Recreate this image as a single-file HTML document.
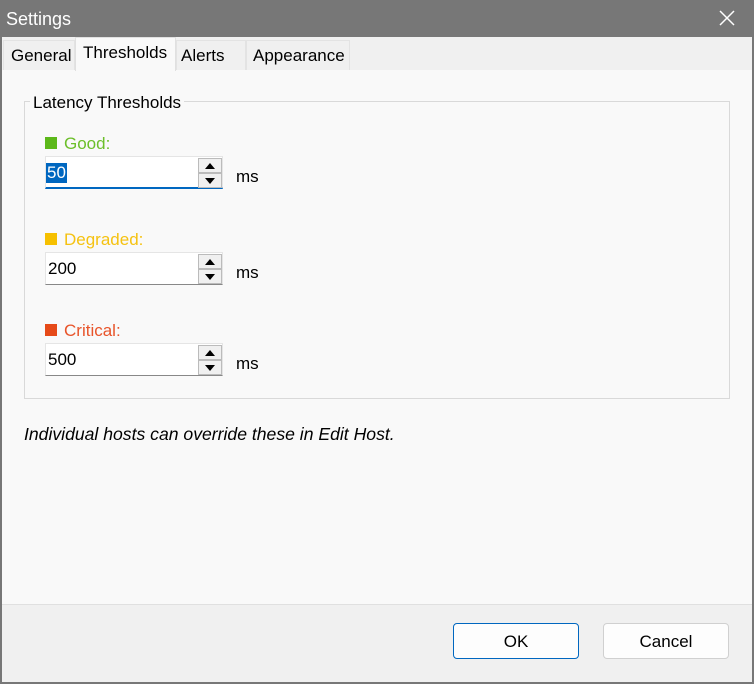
<!DOCTYPE html>
<html><head><style>
*{margin:0;padding:0;box-sizing:border-box}
body{width:754px;height:684px;background:#777;font-family:"Liberation Sans",sans-serif;position:relative;overflow:hidden}
.a{position:absolute}
.t{font-size:16px;color:#000;white-space:nowrap}
.win{left:2px;top:37px;width:750px;height:645px;background:#f0f0f0}
.page{left:2px;top:70px;width:750px;height:535px;background:#f9f9f9;border-bottom:1px solid #e0e0e0}
.tab{top:40px;height:30px;background:#f0f0f0;border:1px solid #e3e3e3;border-bottom:none;font-size:17px;padding:5px 0 0 7px}
.box{left:24px;top:101px;width:706px;height:298px;border:1px solid #d9d9d9}
.inp{width:178px;height:33px;background:#fff;border:1px solid #e5e5e5;border-bottom:1px solid #888}
.inp span{position:absolute;left:2px;top:6px;font-size:17px}
.sp{position:absolute;right:0;width:24px;height:15px;background:#f0f0f0;border:1px solid #bbb}
.sp.u{top:1px}.sp.d{top:16px}
.sp:after{content:"";position:absolute;left:6px;border-left:5px solid transparent;border-right:5px solid transparent}
.sp.u:after{top:4px;border-bottom:6px solid #000}
.sp.d:after{top:4px;border-top:6px solid #000}
.sq{display:inline-block;width:12px;height:12px;margin-right:7px}
.btn{top:623px;width:126px;height:36px;background:#fdfdfd;border:1px solid #d0d0d0;border-radius:4px;text-align:center;font-size:17px;padding-top:8px}
</style></head><body>
<div class="a t" style="left:6px;top:9px;color:#fff;font-size:18px">Settings</div>
<svg class="a" style="left:719px;top:10px" width="16" height="16"><path d="M1 1L15 15M15 1L1 15" stroke="#fff" stroke-width="1.5"/></svg>
<div class="a win"></div>
<div class="a page"></div>
<div class="a tab" style="left:3px;width:72px">General</div>
<div class="a tab" style="left:75px;top:37px;height:34px;width:101px;background:#f9f9f9;border-color:#e0e0e0">Thresholds</div>
<div class="a tab" style="left:176px;width:70px;padding-left:4px">Alerts</div>
<div class="a tab" style="left:246px;width:104px;padding-left:6px">Appearance</div>
<div class="a box"></div>
<div class="a t" style="left:30px;top:93px;background:#f9f9f9;padding:0 3px;font-size:17px">Latency Thresholds</div>

<div class="a t" style="left:45px;top:134px;color:#6cbf2a;font-size:17px"><span class="sq" style="background:#5cb81a"></span>Good:</div>
<div class="a inp" style="left:45px;top:156px;border-bottom:2px solid #0067c0"><span style="background:#0067c0;color:#fff;left:0;padding:0 1px">50</span><div class="sp u"></div><div class="sp d"></div></div>
<div class="a t" style="left:236px;top:167px;font-size:17px">ms</div>

<div class="a t" style="left:45px;top:230px;color:#f5c211;font-size:17px"><span class="sq" style="background:#f6c000"></span>Degraded:</div>
<div class="a inp" style="left:45px;top:252px"><span>200</span><div class="sp u"></div><div class="sp d"></div></div>
<div class="a t" style="left:236px;top:263px;font-size:17px">ms</div>

<div class="a t" style="left:45px;top:321px;color:#e8542a;font-size:17px"><span class="sq" style="background:#e64a19"></span>Critical:</div>
<div class="a inp" style="left:45px;top:343px"><span>500</span><div class="sp u"></div><div class="sp d"></div></div>
<div class="a t" style="left:236px;top:354px;font-size:17px">ms</div>

<div class="a t" style="left:24px;top:424px;font-style:italic;font-size:17.6px">Individual hosts can override these in Edit Host.</div>

<div class="a btn" style="left:453px;border:1px solid #0067c0">OK</div>
<div class="a btn" style="left:603px">Cancel</div>
</body></html>
